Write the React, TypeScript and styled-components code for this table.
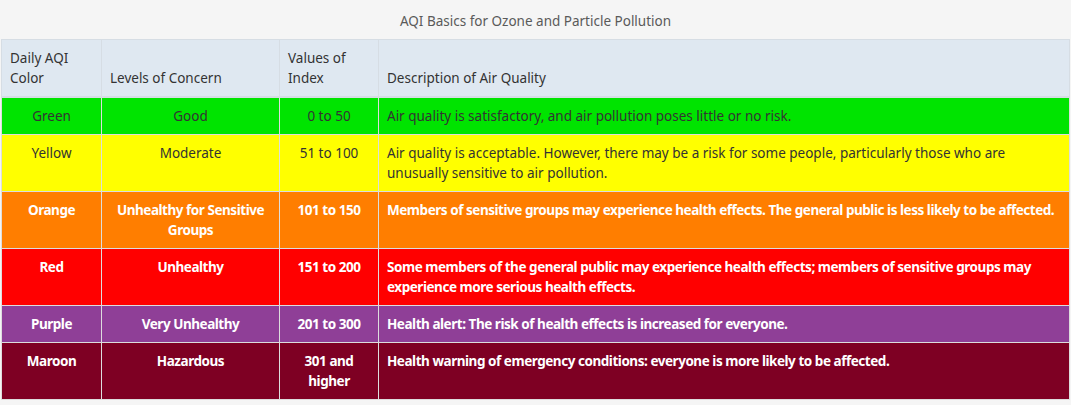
import styled, { createGlobalStyle } from "styled-components"

const GlobalStyle = createGlobalStyle`
  html, body {
    margin: 0;
    padding: 0;
    background: #f5f5f5;
    font-family: "Noto Sans", "Open Sans", sans-serif;
    font-size: 13.5px;
    color: #333;
  }
`

type Level = {
  color: string
  level: string
  range: string
  desc: string
  bg: string
  light?: boolean
}

const levels: Level[] = [
  { color: "Green", level: "Good", range: "0 to 50", bg: "#00e400", desc: "Air quality is satisfactory, and air pollution poses little or no risk." },
  { color: "Yellow", level: "Moderate", range: "51 to 100", bg: "#ffff00", desc: "Air quality is acceptable. However, there may be a risk for some people, particularly those who are unusually sensitive to air pollution." },
  { color: "Orange", level: "Unhealthy for Sensitive Groups", range: "101 to 150", bg: "#ff7e00", light: true, desc: "Members of sensitive groups may experience health effects. The general public is less likely to be affected." },
  { color: "Red", level: "Unhealthy", range: "151 to 200", bg: "#ff0000", light: true, desc: "Some members of the general public may experience health effects; members of sensitive groups may experience more serious health effects." },
  { color: "Purple", level: "Very Unhealthy", range: "201 to 300", bg: "#8f3f97", light: true, desc: "Health alert: The risk of health effects is increased for everyone." },
  { color: "Maroon", level: "Hazardous", range: "301 and higher", bg: "#7e0023", light: true, desc: "Health warning of emergency conditions: everyone is more likely to be affected." },
]

const App = () => {
  return (
    <>
      <GlobalStyle />
      <Wrap>
        <Table>
          <Caption>AQI Basics for Ozone and Particle Pollution</Caption>
          <colgroup>
            <col style={{ width: 100 }} />
            <col style={{ width: 178 }} />
            <col style={{ width: 99 }} />
            <col />
          </colgroup>
          <thead>
            <tr>
              <Th>Daily AQI Color</Th>
              <Th>Levels of Concern</Th>
              <Th>Values of Index</Th>
              <Th>Description of Air Quality</Th>
            </tr>
          </thead>
          <tbody>
            {levels.map((l) => (
              <Row key={l.color} $bg={l.bg} $light={l.light}>
                <Center>{l.color}</Center>
                <Center>{l.level}</Center>
                <Center>{l.range}</Center>
                <Td>{l.desc}</Td>
              </Row>
            ))}
          </tbody>
        </Table>
      </Wrap>
    </>
  )
}

export default App

const Wrap = styled.div`
  width: 1071px;
  padding: 0 1px 0 1px;
  box-sizing: border-box;
`
const Table = styled.table`
  width: 100%;
  border-collapse: collapse;
  table-layout: fixed;
  line-height: 20px;
`
const Caption = styled.caption`
  color: #5a5a5a;
  text-align: center;
  padding: 11px 0 8px;
  line-height: 20px;
`
const Th = styled.th`
  background: #dfe8f1;
  border: 1px solid #d6dde4;
  border-bottom-width: 2px;
  padding: 8px;
  text-align: left;
  vertical-align: bottom;
  font-weight: normal;
  color: #333;
`
const Row = styled.tr<{ $bg: string; $light?: boolean }>`
  background: ${(p) => p.$bg};
  color: ${(p) => (p.$light ? "#fff" : "#333")};
  font-weight: ${(p) => (p.$light ? "bold" : "normal")};
  letter-spacing: ${(p) => (p.$light ? "-0.46px" : "0")};
`
const Td = styled.td`
  border: 1px solid #dddddd;
  padding: 8px;
  vertical-align: top;
`
const Center = styled(Td)`
  text-align: center;
`
